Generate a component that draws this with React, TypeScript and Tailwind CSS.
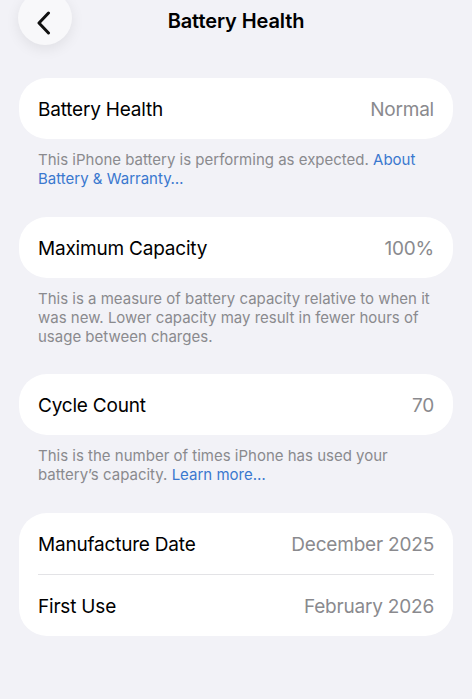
import React from "react";

const font = { fontFamily: "Inter, 'Noto Sans', 'Liberation Sans', sans-serif" };

function Row({ label, value }: { label: string; value: string }) {
  return (
    <div className="flex h-[61px] items-center justify-between px-[19px] pt-[3px]">
      <span className="text-[19px] tracking-[-0.2px] text-black">{label}</span>
      <span className="text-[19px] tracking-[-0.2px] text-[#8a8a8e]">{value}</span>
    </div>
  );
}

function Note({ children }: { children: React.ReactNode }) {
  return (
    <div className="px-[38px] pt-[11px] text-[15px] leading-[19px] text-[#8a8a8e]">{children}</div>
  );
}

export default function App() {
  return (
    <div className="relative h-[699px] w-[472px] overflow-hidden bg-[#f2f2f7]" style={font}>
      <div className="absolute left-[18px] top-[-9px] flex h-[54px] w-[54px] items-center justify-center rounded-full bg-[#f8f8fa] shadow-[0_4px_14px_rgba(0,0,0,0.08)]">
        <svg width="16" height="24" viewBox="0 0 16 24" className="mt-[9px] mr-[3px]">
          <path d="M12.5 2 L3 12 L12.5 22" fill="none" stroke="#111" strokeWidth="3" strokeLinecap="round" strokeLinejoin="round" />
        </svg>
      </div>
      <div className="flex h-[40px] items-center justify-center pt-[2px]">
        <span className="text-[20px] font-semibold tracking-[-0.1px] text-black">Battery Health</span>
      </div>

      <div className="flex flex-col pt-[38px]">
        <div className="mx-[19px] rounded-[28px] bg-white">
          <Row label="Battery Health" value="Normal" />
        </div>
        <Note>
          This iPhone battery is performing as expected.{" "}
          <span className="text-[#3a78cf]">About Battery &amp; Warranty…</span>
        </Note>

        <div className="mx-[19px] mt-[29px] rounded-[28px] bg-white">
          <Row label="Maximum Capacity" value="100%" />
        </div>
        <Note>
          This is a measure of battery capacity relative to when it was new. Lower capacity may
          result in fewer hours of usage between charges.
        </Note>

        <div className="mx-[19px] mt-[28px] rounded-[28px] bg-white">
          <Row label="Cycle Count" value="70" />
        </div>
        <Note>
          This is the number of times iPhone has used your battery’s capacity.{" "}
          <span className="text-[#3a78cf]">Learn more…</span>
        </Note>

        <div className="mx-[19px] mt-[29px] rounded-[28px] bg-white">
          <Row label="Manufacture Date" value="December 2025" />
          <div className="mx-[19px] h-px bg-[#e3e3e6]" />
          <Row label="First Use" value="February 2026" />
        </div>
      </div>
    </div>
  );
}
